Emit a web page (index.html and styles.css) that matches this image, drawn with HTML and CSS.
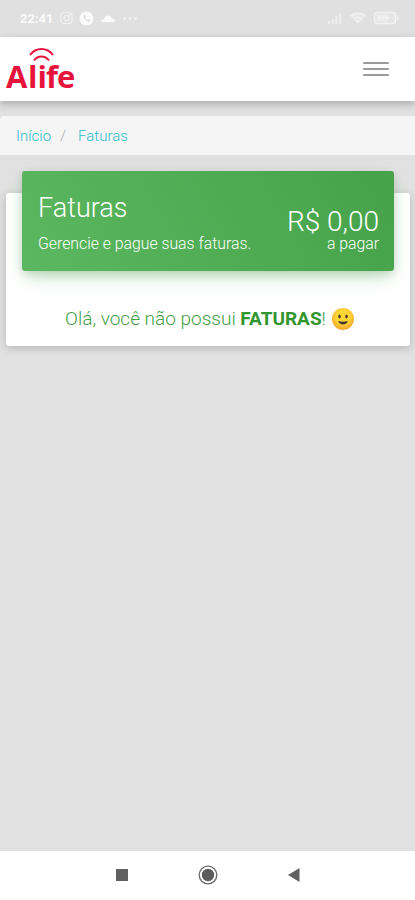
FILE: index.html
```
<!DOCTYPE html>
<html lang="pt-BR">
<head>
    <meta charset="UTF-8">
    <meta name="viewport" content="width=device-width, initial-scale=1.0">
    <title>Alife - Faturas</title>
    <link rel="stylesheet" href="styles.css">
</head>
<body>
    <div class="status-bar">
        <div class="status-left">
            <span class="clock">22:41</span>
            <svg width="13" height="14" viewBox="0 0 13 14" fill="none" stroke="#f0f0f0" stroke-width="1.2">
                <rect x="1" y="1.5" width="11" height="11" rx="3"/>
                <circle cx="6.5" cy="7" r="2.6"/>
                <circle cx="9.6" cy="4" r=".4"/>
            </svg>
            <svg width="15" height="15" viewBox="0 0 15 15">
                <circle cx="7.5" cy="7.5" r="7" fill="#fafafa"/>
                <path d="M4.5 4.2c0 3.5 2.8 6.3 6.3 6.3l.2-1.8-1.9-.7-.9.8C7 8.2 6.4 7.5 6 6.7l.8-.9-.6-1.8z" fill="#dedede"/>
            </svg>
            <svg width="16" height="15" viewBox="0 0 16 15" fill="#fafafa">
                <path d="M1 11c0-2 1.5-3 3-3 .6-2.200 2-3.500 4-3.500s3.200 1.200 3.600 2.800C14 7.300 15 9 15 11z"/>
            </svg>
            <svg width="16" height="15" viewBox="0 0 16 15" fill="#f6f6f6">
                <circle cx="2.5" cy="7.5" r="1.2"/>
                <circle cx="8" cy="7.5" r="1.2"/>
                <circle cx="13.5" cy="7.5" r="1.2"/>
            </svg>
        </div>
        <div class="status-right">
            <svg width="16" height="14" viewBox="0 0 16 14" fill="#eeeeee">
                <path d="M1 10h2v3H1zM4.7 8h2v5h-2zM8.4 5h2v8h-2zM12.1 2h2v11h-2z"/>
            </svg>
            <svg width="18" height="14" viewBox="0 0 18 14">
                <path d="M1 4.500C5.500.300 12.500.300 17 4.500L9 13z" fill="#eeeeee"/>
                <path d="M3.500 6.500c3.500-2.600 7.500-2.600 11 0M6 9.200c2-1.300 4-1.300 6 0" fill="none" stroke="#e2e2e2"/>
            </svg>
            <svg width="27" height="14" viewBox="0 0 27 14">
                <rect x="1.5" y="1.5" width="21" height="11" rx="3" fill="#e6e6e6" stroke="#f2f2f2" stroke-width="1.6"/>
                <rect x="4" y="4" width="8" height="6" fill="#efefef"/>
                <path d="M14 3.500l-3 4h3l-1 3 4-4.500h-3z" fill="#f5f5f5"/>
                <path d="M24 4.500c2 0 2 5 0 5z" fill="#f2f2f2"/>
            </svg>
        </div>
    </div>

    <nav class="navbar">
        <svg class="logo" width="76" height="58" viewBox="0 0 76 58">
            <text class="logo-text" x="3 25 34.5 43 54" y="48">Alife</text>
            <path d="M27 15c6-8 17-8 23 0M31 20.500c4-5.300 11-5.300 15 0" fill="none" stroke="#e6143c" stroke-width="2"/>
        </svg>
        <div class="menu-button">
            <span></span>
            <span></span>
            <span></span>
        </div>
    </nav>

    <div class="breadcrumb">
        <a>Início</a>
        <span class="separator">/</span>
        <a>Faturas</a>
    </div>

    <div class="card">
        <div class="card-header">
            <div>
                <h4 class="title">Faturas</h4>
                <p class="subtitle">Gerencie e pague suas faturas.</p>
            </div>
            <div class="total">
                <div class="amount">R$ 0,00</div>
                <div class="amount-label">a pagar</div>
            </div>
        </div>
        <div class="card-body">
            <span class="message">Olá, você não possui <b>FATURAS</b>!</span>
            <svg width="24" height="24" viewBox="0 0 24 24">
                <defs>
                    <radialGradient id="face" cx=".5" cy=".4" r=".6">
                        <stop offset=".5" stop-color="#fdd835"/>
                        <stop offset="1" stop-color="#f2a42c"/>
                    </radialGradient>
                </defs>
                <circle cx="12" cy="12" r="11" fill="url(#face)"/>
                <ellipse cx="8.500" cy="9.500" rx="1.200" ry="1.900" fill="#49352b"/>
                <ellipse cx="15.500" cy="9.500" rx="1.200" ry="1.900" fill="#49352b"/>
                <path d="M7.300 14q4.700 1.600 9.400 0c-.6 4.600-8.800 4.600-9.400 0z" fill="#49352b"/>
            </svg>
        </div>
    </div>

    <div class="android-nav">
        <svg width="14" height="14" viewBox="0 0 14 14"><rect x="1" y="1" width="12" height="12" fill="#606060"/></svg>
        <svg width="20" height="20" viewBox="0 0 20 20">
            <circle cx="10" cy="10" r="8.8" fill="none" stroke="#6a6a6a" stroke-width="1.3"/>
            <circle cx="10" cy="10" r="6.2" fill="#5c5c5c"/>
        </svg>
        <svg width="14" height="14" viewBox="0 0 14 14"><path d="M1 7l11.500-7v14z" fill="#606060"/></svg>
    </div>
</body>
</html>
```
FILE: styles.css
```
* {
    box-sizing: border-box;
}
body {
    display: flex;
    flex-direction: column;
    height: 900px;
    margin: 0;
    background-color: #e1e1e1;
    font-family: Roboto, sans-serif;
    font-weight: 300;
    overflow: hidden;
}
svg {
    display: block;
    flex: none;
}
.status-bar {
    display: flex;
    justify-content: space-between;
    height: 37px;
    padding: 0 15px 1px 20px;
    background-color: #e0e0e0;
}
.status-left,
.status-right {
    display: flex;
    align-items: center;
    gap: 6px;
}
.clock {
    width: 34px;
    color: #fafafa;
    font-size: 13px;
    font-weight: 700;
}
.navbar {
    display: flex;
    align-items: center;
    justify-content: space-between;
    height: 64px;
    padding: 0 26px 0 3px;
    background-color: #fff;
    box-shadow: 0 3px 8px rgba(0, 0, 0, 0.25);
}
.logo-text {
    fill: #e6143c;
    font-family: "Open Sans", sans-serif;
    font-size: 31px;
    font-weight: 700;
}
.menu-button {
    display: flex;
    flex-direction: column;
    gap: 4px;
    width: 26px;
}
.menu-button span {
    height: 2px;
    border-radius: 1px;
    background-color: #999;
}
.breadcrumb {
    display: flex;
    align-items: center;
    height: 39px;
    margin-top: 15px;
    padding: 0 16px;
    border-radius: 4px 0 0 0;
    background-color: #f5f5f5;
    color: #2fbccd;
    font-size: 15px;
    font-weight: 300;
}
.separator {
    margin: 0 12px 0 9px;
    color: #aaa;
}
.card {
    height: 153px;
    margin: 38px 5px 0 6px;
    padding: 0 16px;
    border-radius: 3px;
    background-color: #fff;
    box-shadow: 0 2px 8px rgba(0, 0, 0, 0.2);
}
.card-header {
    display: flex;
    justify-content: space-between;
    height: 100px;
    margin-top: -22px;
    padding: 21px 15px 0 16px;
    border-radius: 3px;
    background: linear-gradient(60deg, #5cb860, #45a249);
    box-shadow: 0 8px 18px -4px rgba(76, 175, 80, 0.4), 0 3px 8px rgba(0, 0, 0, 0.12);
    color: #fff;
}
.title {
    margin: 0;
    font-size: 27px;
    font-weight: 300;
    line-height: 32px;
}
.subtitle {
    margin: 10px 0 0;
    font-size: 15.8px;
    line-height: 20px;
}
.total {
    padding-top: 18px;
    text-align: right;
}
.amount {
    font-size: 28px;
    line-height: 24px;
}
.amount-label {
    font-size: 15.8px;
    line-height: 20px;
}
.card-body {
    display: flex;
    align-items: center;
    justify-content: center;
    gap: 5px;
    padding: 36px 0 0 4px;
}
.message {
    color: #43a047;
    font-size: 19px;
    line-height: 24px;
}
.message b {
    color: #32962f;
    font-weight: 700;
}
.android-nav {
    display: flex;
    align-items: center;
    justify-content: center;
    gap: 69px;
    height: 49px;
    margin-top: auto;
    padding-bottom: 2px;
    background-color: #fff;
}
```
